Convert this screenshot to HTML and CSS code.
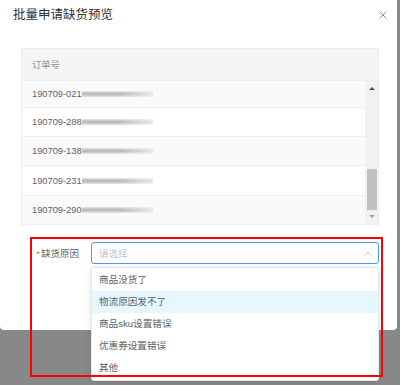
FILE: index.html
```html
<!doctype html>
<html lang="zh">

<head>
  <meta charset="utf-8">
  <title>批量申请缺货预览</title>
  <link rel="stylesheet" href="styles.css">
</head>

<body>
  <section class="dialog">
    <header class="dialog-header">
      <span class="dialog-title">批量申请缺货预览</span>
      <svg class="dialog-close" width="8" height="8" viewBox="0 0 8 8">
        <path d="M0.5 0.5L7.5 7.5M7.5 0.5L0.5 7.5" stroke="#909399" stroke-width="1" fill="none"/>
      </svg>
    </header>

    <div class="table">
      <div class="table-head">订单号</div>
      <div class="table-body">
        <div class="rows">
          <div class="row stripe first">190709-021<span class="blur"></span></div>
          <div class="row">190709-288<span class="blur"></span></div>
          <div class="row stripe">190709-138<span class="blur"></span></div>
          <div class="row tall">190709-231<span class="blur"></span></div>
          <div class="row stripe last">190709-290<span class="blur"></span></div>
        </div>
        <div class="scrollbar">
          <span class="arrow-up"></span>
          <span class="thumb"></span>
          <span class="arrow-down"></span>
        </div>
      </div>
    </div>

    <div class="form-item">
      <label class="form-label"><span class="req">*</span>缺货原因</label>
      <div class="select">
        <span class="placeholder">请选择</span>
        <svg class="caret" width="8" height="5" viewBox="0 0 8 5">
          <path d="M0.5 4.5L4 1L7.5 4.5" stroke="#c0c4cc" stroke-width="1" fill="none"/>
        </svg>
        <ul class="dropdown">
          <li>商品没货了</li>
          <li class="hover">物流原因发不了</li>
          <li>商品sku设置错误</li>
          <li>优惠券设置错误</li>
          <li>其他</li>
        </ul>
      </div>
    </div>
  </section>

  <div class="mark"></div>
</body>

</html>
```

FILE: styles.css
```css
* {
  box-sizing: border-box;
  font-family: "Liberation Sans", "Noto Sans CJK SC", sans-serif;
}

body {
  margin: 0;
  width: 400px;
  height: 385px;
  overflow: hidden;
  background-color: #888888;
  position: relative;
}

.dialog {
  width: 397px;
  padding-bottom: 66px;
  background-color: #fff;
  border-radius: 0 0 4px 4px;
}

.dialog-header {
  display: flex;
  justify-content: space-between;
  align-items: center;
  height: 48px;
  padding: 0 10px 18px 13px;
}

.dialog-title {
  font-size: 12.5px;
  line-height: 14px;
  color: #303133;
}

.table {
  margin: 0 18px 0 21px;
  border: 1px solid #ebeef5;
  font-size: 9.3px;
  color: #606266;
}

.table-head {
  height: 32px;
  line-height: 32px;
  padding-left: 10px;
  background-color: #f5f5f5;
  color: #909399;
  border-bottom: 1px solid #ebeef5;
}

.table-body {
  display: flex;
}

.rows {
  flex: 1;
}

.row {
  display: flex;
  align-items: center;
  height: 29px;
  padding-left: 10px;
  border-bottom: 1px solid #ebeef5;
  background-color: #fff;
}

.row.stripe {
  background-color: #fafafa;
}

.row.first {
  height: 27px;
}

.row.tall {
  height: 30px;
}

.row.last {
  height: 28px;
  border-bottom: none;
}

.blur {
  display: inline-block;
  width: 71px;
  height: 6px;
  background:
    linear-gradient(to right, rgba(250, 250, 250, 0) 55%, rgba(250, 250, 250, 0.7)),
    linear-gradient(#e6e6e6, #b4b4b4 50%, #e6e6e6);
}

.scrollbar {
  width: 13px;
  background-color: #f1f1f1;
  display: flex;
  flex-direction: column;
  align-items: center;
}

.arrow-up {
  margin-top: 6px;
  border-left: 3px solid transparent;
  border-right: 3px solid transparent;
  border-bottom: 3px solid #505050;
}

.thumb {
  margin-top: 79px;
  width: 10px;
  height: 41px;
  background-color: #c1c1c1;
}

.arrow-down {
  margin-top: 5px;
  border-left: 3px solid transparent;
  border-right: 3px solid transparent;
  border-top: 3px solid #a3a3a3;
}

.form-item {
  display: flex;
  align-items: center;
  margin: 17px 18px 0 21px;
}

.form-label {
  width: 70px;
  padding-right: 12px;
  text-align: right;
  font-size: 9.5px;
  color: #606266;
}

.req {
  color: #f56c6c;
  margin-right: 1px;
}

.select {
  flex: 1;
  position: relative;
  display: flex;
  align-items: center;
  justify-content: space-between;
  height: 22px;
  padding: 0 6px 0 7px;
  border: 1px solid #409eff;
  border-radius: 3px;
}

.placeholder {
  font-size: 9.5px;
  color: #c0c4cc;
}

.dropdown {
  position: absolute;
  top: 24px;
  left: -1px;
  right: -1px;
  margin: 0;
  padding: 1px 0;
  list-style: none;
  background-color: #fff;
  border: 1px solid #e4e7ed;
  border-radius: 3px;
  box-shadow: 0 1px 6px rgba(0, 0, 0, 0.12);
}

.dropdown li {
  height: 22px;
  line-height: 22px;
  padding-left: 7px;
  font-size: 9.6px;
  color: #606266;
}

.dropdown li.hover {
  background-color: #e6f7fd;
}

.mark {
  position: absolute;
  left: 30px;
  top: 237px;
  width: 353px;
  height: 140px;
  border: 2px solid #ff0000;
}
```
